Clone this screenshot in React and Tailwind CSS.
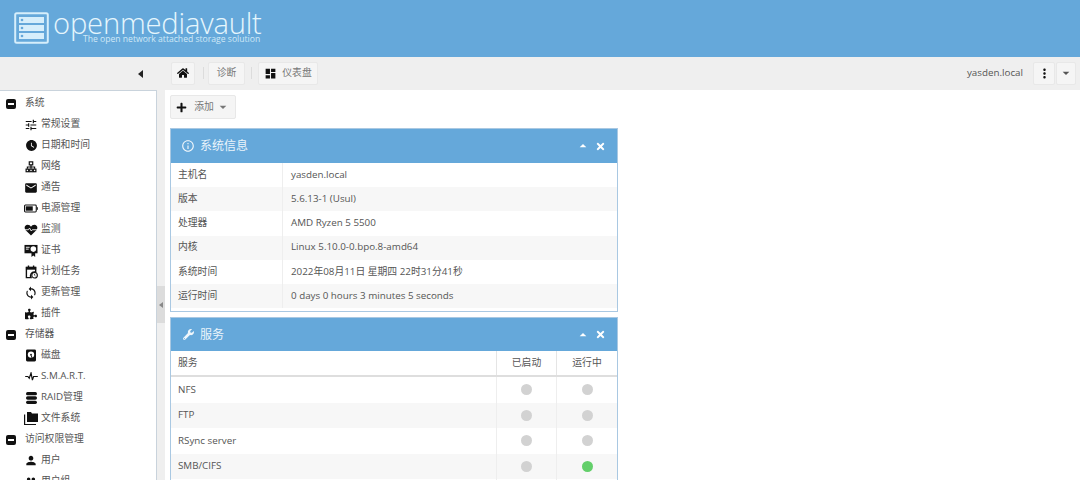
import React from "react";
import { FaHome, FaPlus, FaWrench, FaTimes, FaPuzzlePiece } from "react-icons/fa";
import { MdTune, MdWatchLater, MdEmail, MdDashboard, MdMoreVert, MdInfoOutline, MdSync, MdArrowDropDown, MdArrowDropUp, MdPerson, MdPeople } from "react-icons/md";

const font = { fontFamily: '"Open Sans","Noto Sans CJK SC",sans-serif' };

const Net = () => (
  <svg viewBox="0 0 14 14" className="w-[12px] h-[12px]" fill="none" stroke="#111" strokeWidth="1.4">
    <rect x="5" y="1" width="4" height="3.5" /><path d="M7 4.5V7M2.8 9V7h8.4v2M7 7v2" />
    <rect x="1.3" y="9.5" width="3" height="3" /><rect x="5.5" y="9.5" width="3" height="3" /><rect x="9.7" y="9.5" width="3" height="3" />
  </svg>
);
const Battery = () => (
  <svg viewBox="0 0 16 9" className="w-[16px] h-[9px]"><rect x="0.6" y="0.6" width="13.4" height="7.8" rx="1" fill="none" stroke="#111" strokeWidth="1.2" /><rect x="2" y="2" width="8" height="5" fill="#111" /><rect x="14.5" y="3" width="1.3" height="3" fill="#111" /></svg>
);
const Heart = () => (
  <svg viewBox="0 0 16 14" className="w-[14px] h-[12px]"><path d="M8 13.5 1.500 7C-.5 4.500 1 1 4 1c2 0 3.200 1 4 2.200C8.800 2 10 1 12 1c3 0 4.500 3.500 2.500 6z" fill="#111" /><path d="M1 6.700h4l1.300-2 2 3.500 1.200-1.500H15" stroke="#fff" strokeWidth="1" fill="none" /></svg>
);
const Cert = () => (
  <svg viewBox="0 0 15 14" className="w-[14px] h-[13px]"><rect x="0.5" y="1" width="14" height="9" fill="#111" /><rect x="2" y="3" width="4" height="1" fill="#fff" /><rect x="2" y="5" width="3" height="1" fill="#fff" /><circle cx="10" cy="5.500" r="3" fill="#fff" /><path d="M8 9v5l2-1.500L12 14V9z" fill="#111" /></svg>
);
const Cal = () => (
  <svg viewBox="0 0 14 15" className="w-[13px] h-[14px]"><path d="M1.500 2.500h10v5H10a4 4 0 0 0-3.500 6h-5z" fill="none" stroke="#111" strokeWidth="1.500" /><rect x="1" y="2" width="11" height="3" fill="#111" /><rect x="3" y="0.500" width="1.500" height="3" fill="#111" /><rect x="8.500" y="0.500" width="1.500" height="3" fill="#111" /><circle cx="10.300" cy="11" r="3" fill="none" stroke="#111" strokeWidth="1.200" /><path d="M10.300 9.500V11l1 .8" stroke="#111" strokeWidth=".8" fill="none" /></svg>
);
const Disk = () => (
  <svg viewBox="0 0 11 13" className="w-[10px] h-[13px]"><rect width="11" height="13" rx="1.500" fill="#111" /><circle cx="5.500" cy="5.500" r="3.500" fill="#fff" /><circle cx="5.500" cy="5.500" r="1" fill="#111" /><path d="M5.500 6 7 10" stroke="#111" strokeWidth="1" /></svg>
);
const Pulse = () => (
  <svg viewBox="0 0 14 10" className="w-[13px] h-[9px]"><path d="M0 5h3l1.500 2L6.500 1 8 9l1.300-4H14" fill="none" stroke="#111" strokeWidth="1.300" /></svg>
);
const Db = () => (
  <svg viewBox="0 0 12 14" className="w-[11px] h-[14px]" fill="#111"><rect x="0" y="0.500" width="12" height="3.600" rx="1.800" /><rect x="0" y="5.200" width="12" height="3.600" rx="1.800" /><rect x="0" y="9.900" width="12" height="3.600" rx="1.800" /></svg>
);
const Folders = () => (
  <svg viewBox="0 0 14 13" className="w-[14px] h-[13px]" fill="#111"><path d="M3 0h4l1 1.500h6V10H3z" /><path d="M0.600 2.500v10h11.400" fill="none" stroke="#111" strokeWidth="1.200" /></svg>
);
const Minus = () => (
  <span className="w-[10px] h-[10px] rounded-[2px] bg-[#111] flex items-center justify-center"><span className="w-[6px] h-[2px] bg-white" /></span>
);
const i = "text-[#111]";
const nav = [
  ["系统", null],
  ["常规设置", <MdTune size={14} className={i} />],
  ["日期和时间", <MdWatchLater size={13} className={i} />],
  ["网络", <Net />],
  ["通告", <MdEmail size={14} className={i} />],
  ["电源管理", <Battery />],
  ["监测", <Heart />],
  ["证书", <Cert />],
  ["计划任务", <Cal />],
  ["更新管理", <MdSync size={14} className={i} />],
  ["插件", <FaPuzzlePiece size={12} className={i} />],
  ["存储器", null],
  ["磁盘", <Disk />],
  ["S.M.A.R.T.", <Pulse />],
  ["RAID管理", <Db />],
  ["文件系统", <Folders />],
  ["访问权限管理", null],
  ["用户", <MdPerson size={15} className={i} />],
  ["用户组", <MdPeople size={15} className={i} />],
];
const info = [
  ["主机名", "yasden.local"],
  ["版本", "5.6.13-1 (Usul)"],
  ["处理器", "AMD Ryzen 5 5500"],
  ["内核", "Linux 5.10.0-0.bpo.8-amd64"],
  ["系统时间", "2022年08月11日 星期四 22时31分41秒"],
  ["运行时间", "0 days 0 hours 3 minutes 5 seconds"],
];
const svcs = [["NFS", 0], ["FTP", 0], ["RSync server", 0], ["SMB/CIFS", 1], ["SSH", 0]];

const PanelHeader = ({ icon, title, h }) => (
  <div className={"shrink-0 bg-[#65a8da] flex items-center pl-[10px] pr-[11px] text-white " + h}>
    <span className="w-[14px] flex justify-center opacity-90">{icon}</span>
    <span className="ml-[5px] text-[12px] text-[#eaf4fb]">{title}</span>
    <span className="ml-auto flex items-center gap-[4px]">
      <MdArrowDropUp size={16} />
      <FaTimes size={11} />
    </span>
  </div>
);
const Btn = ({ children, className = "" }) => (
  <div className={"h-[23px] bg-[#f5f5f5] border border-[#e8e8e8] rounded-[2px] flex items-center justify-center text-[#777] " + className}>{children}</div>
);
const Sep = ({ className }) => <div className={"w-px h-[12px] bg-[#dcdcdc] " + className} />;
const Dot = ({ on }) => <span className={"w-[11px] h-[11px] rounded-full " + (on ? "bg-[#63cf6a]" : "bg-[#d2d2d2]")} />;

export default function App() {
  return (
    <div className="w-[1080px] h-[480px] overflow-hidden bg-white flex flex-col text-[9.8px] text-[#555]" style={font}>
      <header className="h-[57px] shrink-0 bg-[#65a8da] flex items-start pl-[14px]">
        <svg viewBox="0 0 35 32" className="w-[35px] h-[32px] mt-[12px]" fill="none">
          <rect x="1.200" y="1.200" width="32.600" height="29.600" rx="1.500" stroke="#d6eefb" strokeWidth="2" />
          <rect x="5" y="5" width="25" height="6" fill="#d6eefb" /><rect x="5" y="13" width="25" height="6" fill="#d6eefb" /><rect x="5" y="21" width="25" height="6" fill="#d6eefb" />
          <circle cx="8" cy="8" r="1.300" fill="#65a8da" /><circle cx="8" cy="16" r="1.300" fill="#65a8da" /><circle cx="8" cy="24" r="1.300" fill="#65a8da" />
        </svg>
        <div className="ml-[4px] flex flex-col">
          <span className="text-[29.200px] leading-[22px] mt-[12px] font-light text-[#e6f6fd] tracking-[-0.2px]">openmediavault</span>
          <span className="text-[8.600px] leading-[10px] ml-[30px] text-[#d0e8f7]">The open network attached storage solution</span>
        </div>
      </header>
      <div className="flex-1 flex min-h-0">
        <div className="w-[157px] shrink-0 flex flex-col">
          <div className="h-[33px] shrink-0 bg-[#efefef] flex items-center justify-end pr-[14px]">
            <span className="w-0 h-0 border-y-[4px] border-y-transparent border-r-[5px] border-r-[#222]" />
          </div>
          <nav className="flex-1 bg-white border-t border-r border-[#c9d3dc] pt-[2px] overflow-hidden">
            {nav.map(([t, ic]) => (
              <div key={t} className="h-[21px] flex items-center">
                {ic ? (
                  <>
                    <span className="ml-[24px] w-[17px] flex justify-center shrink-0 pr-[3px]">{ic}</span>
                    <span>{t}</span>
                  </>
                ) : (
                  <>
                    <span className="ml-[6px] w-[19px] shrink-0 flex"><Minus /></span>
                    <span>{t}</span>
                  </>
                )}
              </div>
            ))}
          </nav>
        </div>
        <div className="w-[8px] shrink-0 bg-[#efefef] flex items-center pb-[14px]">
          <div className="w-[8px] h-[37px] mt-[86px] bg-[#dcdcdc] flex items-center justify-center">
            <span className="w-0 h-0 border-y-[3.500px] border-y-transparent border-r-[4px] border-r-[#888]" />
          </div>
        </div>
        <div className="flex-1 flex flex-col min-w-0">
          <div className="h-[33px] shrink-0 bg-[#efefef] flex items-center pb-[1px]">
            <Btn className="w-[24px] ml-[6px]"><FaHome size={12} className="text-[#111]" /></Btn>
            <Sep className="ml-[8px]" />
            <Btn className="w-[37px] ml-[4px]">诊断</Btn>
            <Sep className="ml-[6px]" />
            <Btn className="w-[60px] ml-[6px] gap-[5px]"><MdDashboard size={13} className="text-[#111]" />仪表盘</Btn>
            <span className="ml-auto text-[#555]">yasden.local</span>
            <Btn className="w-[22px] ml-[10px]"><MdMoreVert size={15} className="text-[#111]" /></Btn>
            <Btn className="w-[20px] ml-px mr-[4px]"><MdArrowDropDown size={16} className="text-[#555]" /></Btn>
          </div>
          <main className="flex-1 min-h-0 overflow-hidden pl-[5px] pt-[5px] flex flex-col">
            <Btn className="w-[66px] h-[24px] shrink-0 pl-[1px]">
              <FaPlus size={11} className="text-[#111]" /><span className="ml-[7px]">添加</span><MdArrowDropDown size={16} className="ml-[1px]" />
            </Btn>
            <section className="w-[448px] h-[184px] shrink-0 mt-[9px] border border-[#a9c8e2] flex flex-col">
              <PanelHeader h="h-[34px]" icon={<MdInfoOutline size={14} />} title="系统信息" />
              {info.map(([k, v], n) => (
                <div key={k} className={"h-[24.200px] shrink-0 flex items-center " + (n % 2 ? "bg-[#f7f7f7]" : "bg-white")}>
                  <div className="w-[112px] h-full flex items-center pl-[7px] border-r border-[#eeeeee]">{k}</div>
                  <div className="pl-[8px]">{v}</div>
                </div>
              ))}
            </section>
            <section className="w-[448px] shrink-0 mt-[5px] border border-[#a9c8e2] flex flex-col">
              <PanelHeader h="h-[33px]" icon={<FaWrench size={11} />} title="服务" />
              <div className="h-[26px] flex items-center border-b-2 border-[#dedede]">
                <div className="flex-1 pl-[7px] pt-[1px]">服务</div>
                <div className="w-[60px] h-full flex items-center justify-center border-l border-[#e5e5e5] pt-[1px]">已启动</div>
                <div className="w-[61px] h-full flex items-center justify-center border-l border-[#e5e5e5] pt-[1px]">运行中</div>
              </div>
              {svcs.map(([s, on], n) => (
                <div key={s} className={"h-[25.500px] shrink-0 flex items-center " + (n % 2 ? "bg-[#f7f7f7]" : "bg-white")}>
                  <div className="flex-1 pl-[7px] pt-[1px]">{s}</div>
                  <div className="w-[60px] h-full flex items-center justify-center border-l border-[#eeeeee]"><Dot /></div>
                  <div className="w-[61px] h-full flex items-center justify-center border-l border-[#eeeeee]"><Dot on={on} /></div>
                </div>
              ))}
            </section>
          </main>
        </div>
      </div>
    </div>
  );
}
